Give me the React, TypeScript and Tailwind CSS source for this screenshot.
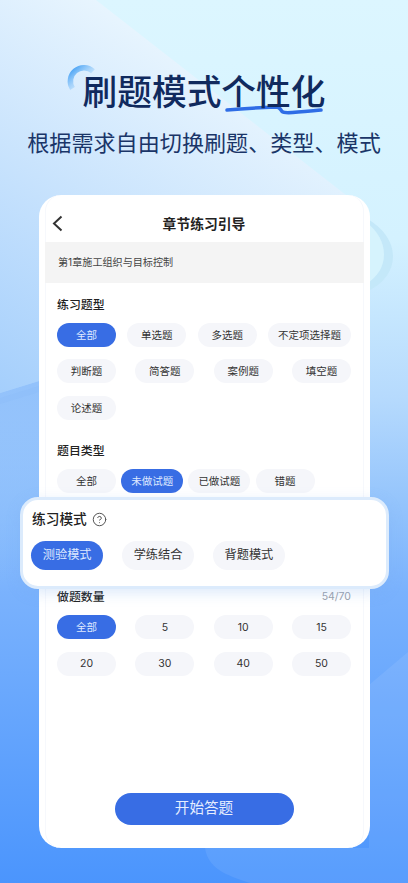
import { CircleHelp } from 'lucide-react';

const FONT = "font-['Inter','Noto_Sans_CJK_SC',sans-serif]";

const QUESTION_TYPES = ['单选题', '多选题'];
const QUESTION_TYPES_2 = ['判断题', '简答题', '案例题', '填空题'];
const COUNTS_1 = ['全部', '5', '10', '15'];
const COUNTS_2 = ['20', '30', '40', '50'];

function Chip({ label, active = false, width = 'w-[59px]' }: { label: string; active?: boolean; width?: string }) {
  return (
    <div
      className={`${width} h-6 pt-[1.5px] shrink-0 rounded-full flex items-center justify-center text-[10.5px] ${
        active ? 'bg-[#386de4] text-[#dfe9ff]' : 'bg-[#f5f6fa] text-[#333]'
      }`}
    >
      {label}
    </div>
  );
}

function ModeChip({ label, active = false }: { label: string; active?: boolean }) {
  return (
    <div
      className={`w-[72.3px] h-[29px] rounded-full flex items-center justify-center text-[12.2px] ${
        active ? 'bg-[#386de4] text-[#dfe9ff]' : 'bg-[#f5f6fa] text-[#333]'
      }`}
    >
      {label}
    </div>
  );
}

function Background() {
  return (
    <svg className="absolute inset-0" width="408" height="883" viewBox="0 0 408 883" fill="none">
      <defs>
        <linearGradient id="bg" x1="0" y1="0" x2="0" y2="883" gradientUnits="userSpaceOnUse">
          <stop offset="0" stopColor="#dcf6ff" />
          <stop offset="0.27" stopColor="#d4f2ff" />
          <stop offset="0.45" stopColor="#b6dafd" />
          <stop offset="0.57" stopColor="#94c4fc" />
          <stop offset="0.67" stopColor="#7ab2fd" />
          <stop offset="1" stopColor="#4b95fd" />
        </linearGradient>
        <linearGradient id="upper" x1="0" y1="390" x2="200" y2="60" gradientUnits="userSpaceOnUse">
          <stop offset="0" stopColor="#a5cffc" />
          <stop offset="1" stopColor="#e8f5fe" />
        </linearGradient>
        <linearGradient id="lower" x1="0" y1="385" x2="0" y2="600" gradientUnits="userSpaceOnUse">
          <stop offset="0" stopColor="#93c2fb" />
          <stop offset="1" stopColor="#7ab2fd" stopOpacity="0" />
        </linearGradient>
      </defs>
      <rect width="408" height="883" fill="url(#bg)" />
      <path d="M96 0L360 206V300L39 381L0 393V0Z" fill="url(#upper)" />
      <path d="M0 393L39 381V600H0Z" fill="url(#lower)" />
      <path d="M0 398L39 386V392L0 404Z" fill="#8dbdfa" opacity="0.5" />
      {/* crescent behind the card on the right */}
      <path d="M366 218C402 238 402 276 366 292Z" fill="#c4e8f9" />
      <path d="M366 222C390 240 390 270 366 284Z" fill="#d6f3fd" />
      <path d="M408 652L369 685V848H205C208 868 225 875 250 883H408Z" fill="#ffffff" opacity="0.08" />
    </svg>
  );
}

function TitleDecor() {
  return (
    <>
      <svg className="absolute left-[64px] top-[61px]" width="36" height="36" viewBox="0 0 36 36" fill="none">
        <defs>
          <linearGradient id="ring" x1="6" y1="8" x2="22" y2="26" gradientUnits="userSpaceOnUse">
            <stop offset="0" stopColor="#3c9cf4" />
            <stop offset="1" stopColor="#d0eafd" stopOpacity="0.4" />
          </linearGradient>
        </defs>
        <path d="M29 10.300A13.500 13.500 0 0 0 8.500 27.500" stroke="url(#ring)" strokeWidth="5.500" />
      </svg>
      <svg className="absolute left-[224px] top-[104px]" width="102" height="12" viewBox="0 0 102 12" fill="none">
        <path
          d="M3 6C20 4.500 40 3.500 52 3C56 3 56 5 58 7.500C60 9.500 66 9 74 8C84 7 92 6.500 97 6"
          stroke="#2f6de6"
          strokeWidth="3.500"
          strokeLinecap="round"
        />
      </svg>
    </>
  );
}

export default function App() {
  return (
    <div className={`relative w-[408px] h-[883px] overflow-hidden ${FONT}`}>
      <Background />
      <TitleDecor />

      <div className="relative flex flex-col items-center pt-[70px]">
        <h1 className="h-[44px] leading-[44px] text-[34.7px] font-medium text-[#102a5e] whitespace-nowrap">
          刷题模式个性化
        </h1>
        <p className="mt-[9px] h-[40px] leading-[40px] text-[22.1px] text-[#1a3568] whitespace-nowrap">
          根据需求自由切换刷题、类型、模式
        </p>

        {/* === Main card === */}
        <main className="mt-[32px] w-[331px] h-[653px] bg-white rounded-[22px] px-[6px]">
          <div className="h-full flex flex-col rounded-[16px] shadow-[inset_1px_0_0_#f6f8fc,inset_-1px_0_0_#f6f8fc]">
            <header className="relative h-[47px] shrink-0 flex items-center justify-center">
              <svg className="absolute left-[6px] top-[20px]" width="12" height="17" viewBox="0 0 12 17" fill="none">
                <path d="M10.500 1.500L3 8.500L10.500 15.500" stroke="#333" strokeWidth="2" />
              </svg>
              <span className="mt-[12px] text-[13.8px] font-bold text-[#222]">章节练习引导</span>
            </header>

            <div className="h-[41px] shrink-0 bg-[#f4f4f4] flex items-center pl-[13.500px] text-[10.1px] text-[#444]">
              第1章施工组织与目标控制
            </div>

            <div className="flex-1 px-[12.5px] flex flex-col">
              <h2 className="mt-[14px] h-[16px] leading-[16px] text-[11.9px] font-medium text-[#222]">练习题型</h2>
              <div className="mt-[10px] flex justify-between">
                <Chip label="全部" active />
                {QUESTION_TYPES.map((t) => (
                  <Chip key={t} label={t} />
                ))}
                <Chip label="不定项选择题" width="w-[83px]" />
              </div>
              <div className="mt-[12px] flex justify-between">
                {QUESTION_TYPES_2.map((t) => (
                  <Chip key={t} label={t} />
                ))}
              </div>
              <div className="mt-[13px]">
                <Chip label="论述题" />
              </div>

              <h2 className="mt-[23px] h-[16px] leading-[16px] text-[11.9px] font-medium text-[#222]">题目类型</h2>
              <div className="mt-[10px] flex gap-[5.2px]">
                <Chip label="全部" />
                <Chip label="未做试题" active width="w-[62px]" />
                <Chip label="已做试题" width="w-[62px]" />
                <Chip label="错题" />
              </div>

              {/* === Highlighted mode panel === */}
              <section className="relative -mx-[37.5px] mt-[4px] h-[92px] shrink-0 rounded-[18px] bg-white border-[3px] border-[#dcebfc] shadow-[0_4px_14px_rgba(120,170,240,0.25)] pl-[8.5px] pt-[9px]">
                <div className="flex items-center gap-[5.5px] pl-[1px] h-[18px] mt-[1px]">
                  <span className="text-[13.7px] font-medium text-[#222]">练习模式</span>
                  <CircleHelp size={15} strokeWidth={1.6} className="text-[#555]" />
                </div>
                <div className="mt-[12.5px] flex gap-[18.6px]">
                  <ModeChip label="测验模式" active />
                  <ModeChip label="学练结合" />
                  <ModeChip label="背题模式" />
                </div>
              </section>

              <div className="h-[16px] flex items-center justify-between">
                <h2 className="text-[11.9px] font-medium text-[#222]">做题数量</h2>
                <span className="text-[10.5px] text-[#9aa0aa]">54/70</span>
              </div>
              <div className="mt-[10px] flex justify-between">
                {COUNTS_1.map((c, i) => (
                  <Chip key={c} label={c} active={i === 0} />
                ))}
              </div>
              <div className="mt-[12.5px] flex justify-between">
                {COUNTS_2.map((c) => (
                  <Chip key={c} label={c} />
                ))}
              </div>

              <div className="mt-auto mb-[23px] flex justify-center">
                <button className="w-[179px] h-[32px] rounded-full bg-[#386de4] text-[#e6eeff] text-[14.6px]">开始答题</button>
              </div>
            </div>
          </div>
        </main>
      </div>
    </div>
  );
}
